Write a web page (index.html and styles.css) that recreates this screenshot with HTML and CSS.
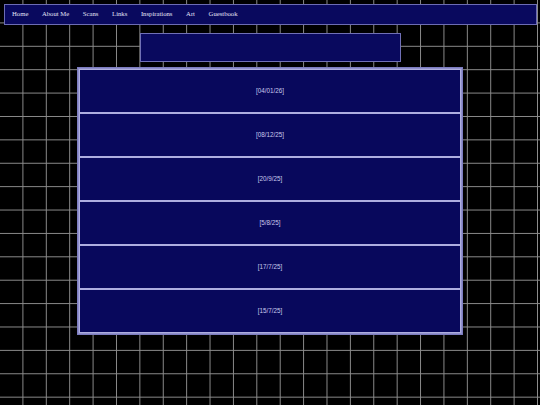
FILE: index.html
```html
<!DOCTYPE html>
<html lang="en">
<head>
<meta charset="utf-8">
<title>Home</title>
<link rel="stylesheet" href="styles.css">
</head>
<body>
<div class="page">
  <nav class="nav">
    <a class="nav-link" href="#">Home</a>
    <a class="nav-link" href="#">About Me</a>
    <a class="nav-link" href="#">Scans</a>
    <a class="nav-link" href="#">Links</a>
    <a class="nav-link" href="#">Inspirations</a>
    <a class="nav-link" href="#">Art</a>
    <a class="nav-link" href="#">Guestbook</a>
  </nav>
  <div class="header-box"></div>
  <main class="posts">
    <div class="post">[04/01/26]</div>
    <div class="post">[08/12/25]</div>
    <div class="post">[20/9/25]</div>
    <div class="post">[5/8/25]</div>
    <div class="post">[17/7/25]</div>
    <div class="post">[15/7/25]</div>
  </main>
</div>
</body>
</html>
```
FILE: styles.css
```css
html, body {
  margin: 0;
  padding: 0;
  height: 100%;
}
body {
  background-color: #000;
  background-image:
    linear-gradient(to right, transparent calc(100% - 1px), #8c8c8c calc(100% - 1px)),
    linear-gradient(to bottom, transparent calc(100% - 1px), #8c8c8c calc(100% - 1px));
  background-size: 23.4px 23.4px;
  overflow: hidden;
}
.page {
  display: flex;
  flex-direction: column;
  align-items: center;
  padding: 3.5px 3.5px 0 3.5px;
}
.nav {
  align-self: stretch;
  box-sizing: border-box;
  height: 21.5px;
  display: flex;
  align-items: center;
  gap: 13.6px;
  padding: 0 0 0 7.5px;
  background: #09095e;
  border: 1px solid #6c6cb4;
}
.nav-link {
  font-family: "Liberation Serif", "Times New Roman", serif;
  font-size: 6.7px;
  color: #e4e4f6;
  text-decoration: none;
  line-height: 1;
}
.header-box {
  box-sizing: border-box;
  width: 261px;
  height: 28.5px;
  margin-top: 8px;
  background: #09095e;
  border: 1px solid #7070b6;
}
.posts {
  box-sizing: border-box;
  width: 386px;
  margin-top: 5px;
  padding: 1px;
  border: 1px solid #7c7cc0;
  background: #9090cc;
  display: flex;
  flex-direction: column;
}
.post {
  box-sizing: border-box;
  height: 44px;
  display: flex;
  align-items: center;
  justify-content: center;
  background: #08085c;
  border: 1px solid #aeaee0;
  font-family: "Liberation Sans", Arial, sans-serif;
  font-size: 6.3px;
  color: #c8c8ec;
}
```
